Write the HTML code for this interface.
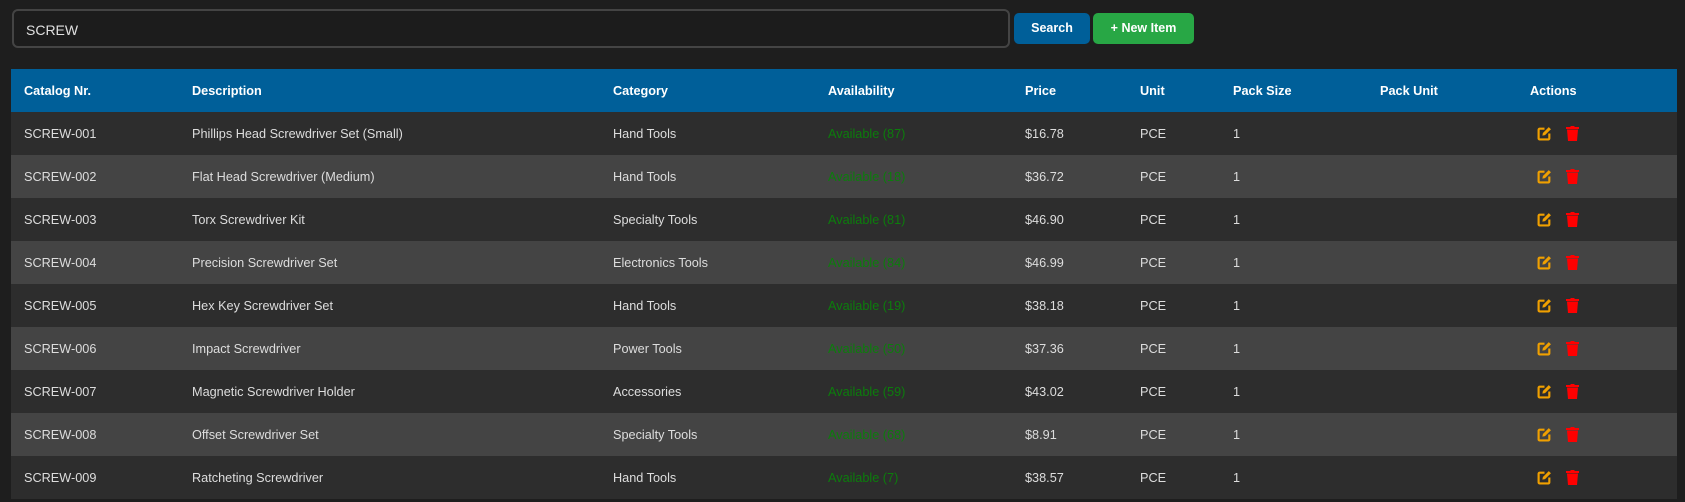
<!DOCTYPE html>
<html><head><style>
*{margin:0;padding:0;box-sizing:border-box}
body{width:1685px;height:502px;background:#1e1e1e;font-family:"Liberation Sans",sans-serif;overflow:hidden;position:relative;color:#ddd}
.inp{position:absolute;left:12px;top:9px;width:998px;height:39px;border:2px solid #444;border-radius:6px;background:#1c1c1c;color:#e0e0e0;font-size:14px;padding:11px 12px}
.btn{position:absolute;top:13px;height:31px;border-radius:5px;color:#fff;font-weight:bold;font-size:12.5px;text-align:center;line-height:31px}
table{position:absolute;left:11px;top:69px;width:1666px;border-collapse:collapse;font-size:12.7px}
th{background:#005f99;color:#fff;text-align:left;height:43px;font-weight:bold;padding:0}
td{height:43px;padding:0;color:#ddd}
tr:nth-child(odd) td{background:#2d2d2d}
tr:nth-child(even) td{background:#444}
.g{color:#0c7d0c}
svg{vertical-align:middle}
</style></head><body>
<div class="inp">SCREW</div>
<div class="btn" style="left:1014px;width:76px;background:#005f99">Search</div>
<div class="btn" style="left:1093px;width:101px;background:#28a745">+ New Item</div>
<table>
<colgroup><col style="width:181px"><col style="width:421px"><col style="width:215px"><col style="width:197px"><col style="width:115px"><col style="width:93px"><col style="width:147px"><col style="width:150px"><col></colgroup>
<thead><tr><th style="padding-left:13px">Catalog Nr.</th><th>Description</th><th>Category</th><th>Availability</th><th>Price</th><th>Unit</th><th>Pack Size</th><th>Pack Unit</th><th>Actions</th></tr></thead>
<tbody id="tb">
</tbody></table>
<script>
var d=[["001","Phillips Head Screwdriver Set (Small)","Hand Tools","87","16.78"],["002","Flat Head Screwdriver (Medium)","Hand Tools","18","36.72"],["003","Torx Screwdriver Kit","Specialty Tools","81","46.90"],["004","Precision Screwdriver Set","Electronics Tools","84","46.99"],["005","Hex Key Screwdriver Set","Hand Tools","19","38.18"],["006","Impact Screwdriver","Power Tools","50","37.36"],["007","Magnetic Screwdriver Holder","Accessories","59","43.02"],["008","Offset Screwdriver Set","Specialty Tools","68","8.91"],["009","Ratcheting Screwdriver","Hand Tools","7","38.57"]];
var ic='<span style="margin-left:7px"><svg width="15" height="15" viewBox="0 0 14 14"><path d="M7 2.5H2.5a1 1 0 0 0-1 1v8a1 1 0 0 0 1 1h8a1 1 0 0 0 1-1V7" fill="none" stroke="#f0a000" stroke-width="2"/><path d="M5 9l.5-2.5L11 1l2 2-5.5 5.5z" fill="#f0a000"/></svg></span><span style="margin-left:14px"><svg width="13" height="15" viewBox="0 0 13 15"><rect x="0" y="1" width="13" height="2" fill="#f00"/><rect x="4.5" y="0" width="4" height="2" fill="#f00"/><path d="M1 3.5h11l-1 11.5H2z" fill="#f00"/></svg></span>';
var h='';d.forEach(function(r){h+='<tr><td style="padding-left:13px">SCREW-'+r[0]+'</td><td>'+r[1]+'</td><td>'+r[2]+'</td><td class="g">Available ('+r[3]+')</td><td>$'+r[4]+'</td><td>PCE</td><td>1</td><td></td><td>'+ic+'</td></tr>'});
document.getElementById('tb').innerHTML=h;
</script>
</body></html>
